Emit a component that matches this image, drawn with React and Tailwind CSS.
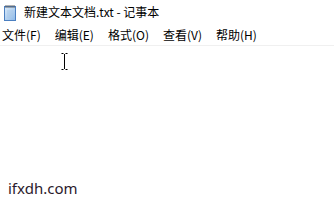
import React from 'react';

const MENU = ['文件(F)', '编辑(E)', '格式(O)', '查看(V)', '帮助(H)'];

function NotepadIcon() {
  return (
    <svg width="16" height="17" viewBox="0 0 16 17" className="shrink-0">
      <defs>
        <linearGradient id="pad" x1="0" y1="0" x2="1" y2="1">
          <stop offset="0" stopColor="#dcecfb" />
          <stop offset="1" stopColor="#8db8e6" />
        </linearGradient>
      </defs>
      <rect x="2.5" y="2.5" width="11" height="14" fill="url(#pad)" stroke="#4b7fc0" />
      <path d="M5 7h6M5 9h6M5 11h6M5 13h4" stroke="#a8c6e6" strokeWidth="0.8" />
      <path d="M4 1v3M6 1v3M8 1v3M10 1v3M12 1v3" stroke="#555" strokeWidth="0.9" />
    </svg>
  );
}

export default function App() {
  return (
    <div className="w-[334px] h-[203px] bg-white flex flex-col text-black" style={{ fontFamily: '"Noto Sans CJK SC", "Noto Sans", sans-serif' }}>
      <div className="h-[24px] flex items-center gap-[6px] pl-[2px]">
        <NotepadIcon />
        <span className="text-[12px] leading-none">新建文本文档.txt - 记事本</span>
      </div>
      <div className="h-[22px] flex items-center pl-[2px] gap-[14px] text-[12px] leading-none border-b border-[#f0f0f0]">
        {MENU.map(m => (
          <span key={m}>{m}</span>
        ))}
      </div>
      <div className="relative flex-1">
        <svg width="7" height="17" viewBox="0 0 7 17" className="absolute left-[61px] top-[7px]">
          <path d="M0.5 0.5h2M4.5 0.5h2M3.5 1v15M0.5 16.5h2M4.5 16.5h2" stroke="#000" strokeWidth="1" fill="none" />
        </svg>
        <div className="absolute left-[8px] bottom-[7px] text-[15px] leading-none text-[#2b1a2b]" style={{ fontFamily: '"Noto Sans", sans-serif' }}>ifxdh.com</div>
      </div>
    </div>
  );
}
